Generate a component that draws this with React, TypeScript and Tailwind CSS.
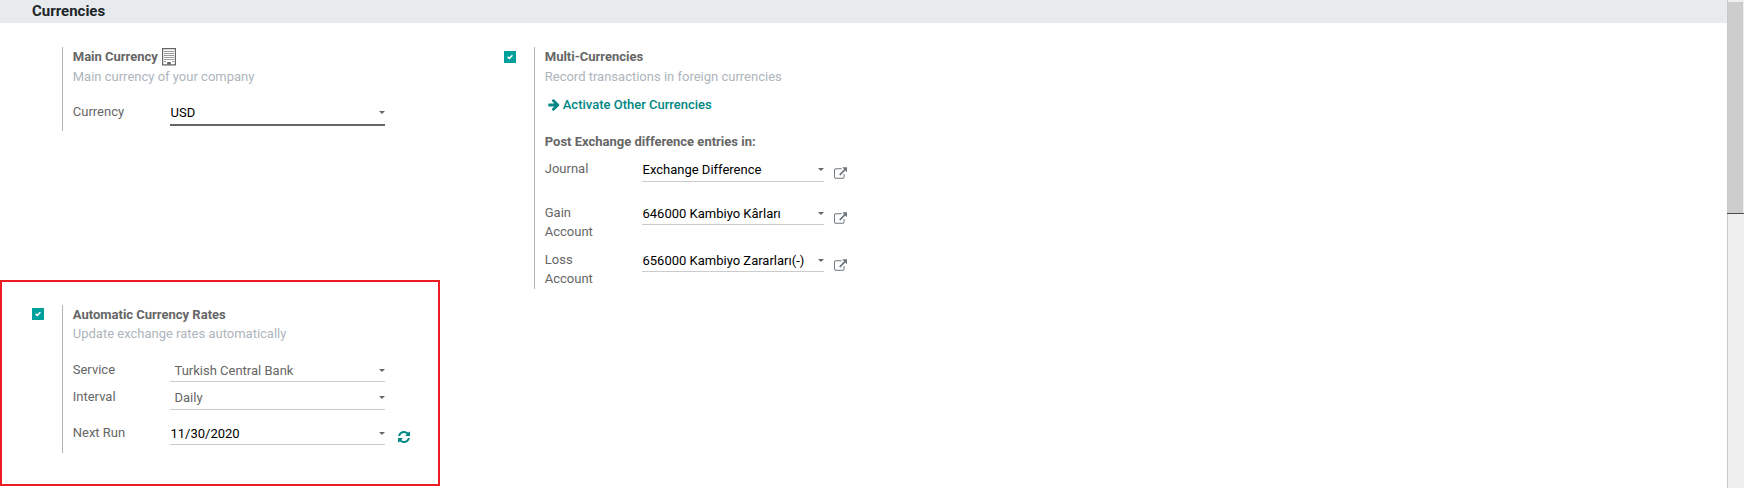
import type { ReactNode } from "react";
import clsx from "clsx";

function BuildingIcon() {
  const rows = [3, 5, 7, 9, 11];
  const cols = [3, 5, 7, 9, 11];
  return (
    <svg className="h-[18px] w-[14px] shrink-0" viewBox="0 0 14 18" fill="#666">
      <path fillRule="evenodd" d="M0 0h14v17.5H0zM1.2 1.2v15.1h11.6V1.2z" />
      {rows.map((y) => cols.map((x) => <rect key={`${x}-${y}`} x={x - 0.65} y={y} width="1.3" height="1" />))}
      <rect x="2.35" y="13" width="1.3" height="1" />
      <rect x="10.35" y="13" width="1.3" height="1" />
      <rect x="5.2" y="14" width="3.6" height="2.6" />
    </svg>
  );
}

function ArrowRightIcon() {
  return (
    <svg className="h-[12px] w-[12px] shrink-0" viewBox="0 100 1536 1600" fill="currentColor">
      <path d="M1472 896q0 54-37 91l-651 651q-39 37-91 37-51 0-90-37l-75-75q-38-38-38-91t38-91l293-293h-704q-52 0-84.5-37.5t-32.5-90.5v-128q0-53 32.5-90.5t84.5-37.5h704l-293-294q-38-36-38-90t38-90l75-75q38-38 90-38 53 0 91 38l651 651q37 35 37 90z" />
    </svg>
  );
}

function ExternalLinkIcon() {
  return (
    <svg className="h-[12px] w-[13.5px] shrink-0" viewBox="0 0 1792 1536" fill="#6c757d">
      <path d="M1408 928v320q0 119-84.5 203.5t-203.5 84.5h-832q-119 0-203.5-84.5t-84.5-203.5v-832q0-119 84.5-203.5t203.5-84.5h704q14 0 23 9t9 23v64q0 14-9 23t-23 9h-704q-66 0-113 47t-47 113v832q0 66 47 113t113 47h832q66 0 113-47t47-113v-320q0-14 9-23t23-9h64q14 0 23 9t9 23zm384-864v512q0 26-19 45t-45 19-45-19l-176-176-652 652q-10 10-23 10t-23-10l-114-114q-10-10-10-23t10-23l652-652-176-176q-19-19-19-45t19-45 45-19h512q26 0 45 19t19 45z" />
    </svg>
  );
}

function RefreshIcon() {
  return (
    <svg className="h-[12px] w-[12px] shrink-0" viewBox="0 0 1536 1536" fill="#008784">
      <path d="M1511 928q0 5-1 7-64 268-268 434.5t-478 166.5q-146 0-282.5-55t-243.5-157l-129 129q-19 19-45 19t-45-19-19-45v-448q0-26 19-45t45-19h448q26 0 45 19t19 45-19 45l-137 137q71 66 161 102t187 36q134 0 250-65t186-179q11-17 53-117 8-23 30-23h192q13 0 22.5 9.5t9.5 22.5zm25-800v448q0 26-19 45t-45 19h-448q-26 0-45-19t-19-45 19-45l138-138q-148-137-349-137-134 0-250 65t-186 179q-11 17-53 117-8 23-30 23h-199q-13 0-22.5-9.5t-9.5-22.5v-7q65-268 270-434.5t480-166.5q146 0 284 55.5t245 156.5l130-129q19-19 45-19t45 19 19 45z" />
    </svg>
  );
}

function Checkbox() {
  return (
    <div className="flex size-3 shrink-0 items-center justify-center bg-[#00a09d]">
      <svg className="size-2" viewBox="0 0 8 8" fill="none" stroke="#fff" strokeWidth="1.5">
        <path d="M1.6 3.9 3.3 5.4 6.4 2.3" />
      </svg>
    </div>
  );
}

type RowProps = {
  label: string;
  value: string;
  className: string;
  fieldClass: string;
  labelClass?: string;
  icon?: ReactNode;
};

function Row({ label, value, className, fieldClass, labelClass, icon }: RowProps) {
  return (
    <div className={clsx("flex items-start", className)}>
      <div className="w-[97.25px] shrink-0 pt-px pr-8">
        <div className={clsx("leading-[19px] text-[#666]", labelClass)}>{label}</div>
      </div>
      <div className={clsx("flex shrink-0 justify-between leading-5", fieldClass)}>
        <span className="mt-0.5 whitespace-nowrap">{value}</span>
        <svg className="mt-[10px] h-[3px] w-[6px]" viewBox="0 0 6 3" fill="#666">
          <path d="M0 0h6L3 3z" />
        </svg>
      </div>
      {icon}
    </div>
  );
}

export default function App() {
  return (
    <div className="flex h-[488px] w-full overflow-hidden bg-white font-['Roboto',sans-serif] text-[13px] leading-5">
      <main className="flex min-w-0 flex-1 flex-col">
        <h2 className="h-[23px] bg-[#e7ebee] pl-8 text-[15px] leading-[22px] font-bold text-[#212529]">Currencies</h2>
        <div className="flex items-start">
          <div className="w-[504px] shrink-0">
            <section className="mt-6 ml-[62px] h-[84px] border-l border-[#b5b5b5] pl-[9.75px]">
              <div className="flex h-5 items-center gap-1">
                <h3 className="font-bold text-[#666]">Main Currency</h3>
                <BuildingIcon />
              </div>
              <p className="text-[#adb5bd]">Main currency of your company</p>
              <Row
                className="mt-[14px]"
                label="Currency"
                value="USD"
                fieldClass="h-[25px] w-[215px] border-b-2 border-[#666] pl-[0.5px] text-black"
              />
            </section>
            <section className="mt-[149px] flex h-[206px] w-[440px] items-start border-2 border-[#ed1c24]">
              <div className="mt-[26px] ml-[30px]">
                <Checkbox />
              </div>
              <div className="mt-[23px] ml-[18px] h-[148px] border-l border-[#b5b5b5] pl-[9.75px]">
                <h3 className="font-bold text-[#666]">Automatic Currency Rates</h3>
                <p className="-mt-px text-[#adb5bd]">Update exchange rates automatically</p>
                <Row
                  className="mt-[15px] h-[27px]"
                  label="Service"
                  value="Turkish Central Bank"
                  fieldClass="h-[23px] w-[215px] border-b border-[#ccc] pl-[4.5px] text-[#666]"
                />
                <Row
                  className="h-9"
                  label="Interval"
                  value="Daily"
                  fieldClass="h-[24px] w-[215px] border-b border-[#ccc] pl-[4.5px] text-[#666]"
                />
                <Row
                  className=""
                  label="Next Run"
                  labelClass="whitespace-nowrap"
                  value="11/30/2020"
                  fieldClass="h-[23px] w-[215px] border-b border-[#ccc] pl-[0.5px] text-black"
                  icon={<div className="mt-[9px] ml-[12.5px]"><RefreshIcon /></div>}
                />
              </div>
            </section>
          </div>
          <section className="mt-6 flex items-start">
            <div className="mt-1">
              <Checkbox />
            </div>
            <div className="ml-[18px] h-[242px] border-l border-[#b5b5b5] pl-[9.75px]">
              <h3 className="font-bold text-[#666]">Multi-Currencies</h3>
              <p className="text-[#adb5bd]">Record transactions in foreign currencies</p>
              <div className="mt-2 flex items-center gap-[3px] pl-[3px] font-medium text-[#008784]">
                <ArrowRightIcon />
                <span>Activate Other Currencies</span>
              </div>
              <h4 className="mt-[17px] font-bold text-[#666]">Post Exchange difference entries in:</h4>
              <Row
                className="mt-[6px] h-11"
                label="Journal"
                value="Exchange Difference"
                fieldClass="h-[24px] w-[182px] border-b border-[#ccc] pl-[0.5px] text-black"
                icon={<div className="mt-[9px] ml-[9.5px]"><ExternalLinkIcon /></div>}
              />
              <Row
                className="h-[47px]"
                label="Gain Account"
                value="646000 Kambiyo Kârları"
                fieldClass="h-[23px] w-[182px] border-b border-[#ccc] pl-[0.5px] text-black"
                icon={<div className="mt-[10px] ml-[9.5px]"><ExternalLinkIcon /></div>}
              />
              <Row
                className=""
                label="Loss Account"
                value="656000 Kambiyo Zararları(-)"
                fieldClass="h-[23px] w-[182px] border-b border-[#ccc] pl-[0.5px] text-black"
                icon={<div className="mt-[10px] ml-[9.5px]"><ExternalLinkIcon /></div>}
              />
            </div>
          </section>
        </div>
      </main>
      <aside className="w-[17px] shrink-0 border-l border-[#c8c8c8] bg-[#efefef] pt-0.5">
        <div className="mr-px h-[211px] bg-[#cdcdcd]" />
        <div className="-ml-px h-px bg-[#4a4a4a]" />
      </aside>
    </div>
  );
}
